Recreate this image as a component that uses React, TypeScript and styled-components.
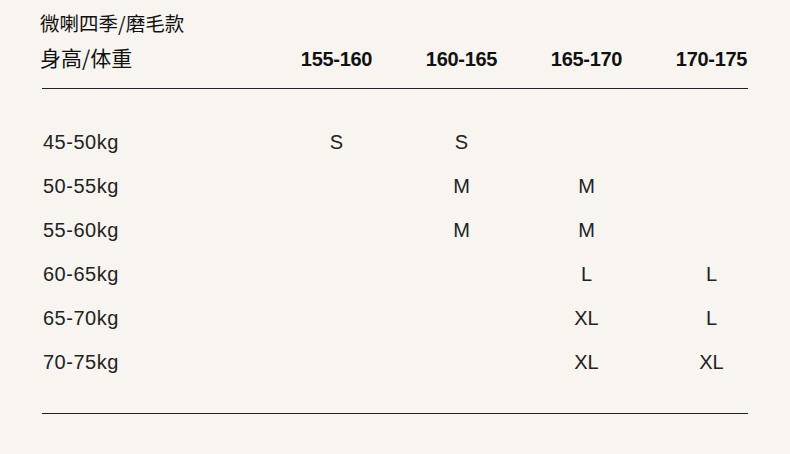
import React from 'react';
import styled, { createGlobalStyle } from 'styled-components';

const GlobalStyle = createGlobalStyle`
  html, body {
    margin: 0;
    padding: 0;
    background: #f8f5f0;
  }
  body {
    font-family: "Liberation Sans", Arial, "Noto Sans CJK SC", sans-serif;
    color: #1c1c1c;
  }
`;

const Page = styled.div`
  width: 790px;
  height: 454px;
  box-sizing: border-box;
  padding: 11px 0 0 42px;
  overflow: hidden;
`;

const Table = styled.div`
  width: 706px;
`;

const Caption = styled.div`
  margin-left: -2px;
  font-family: "Noto Sans CJK SC", sans-serif;
  font-size: 19.5px;
  line-height: 24px;
  color: #111;
`;

const Grid = styled.div<{ $height: number }>`
  display: grid;
  grid-template-columns: 232px repeat(4, 125px);
  height: ${p => p.$height}px;
  align-items: center;
`;

const HeadRow = styled(Grid)`
  margin-top: 8px;
  align-items: end;
  padding-bottom: 1px;
`;

const HeadLabel = styled.div`
  margin-left: -2px;
  margin-bottom: 16px;
  font-family: "Noto Sans CJK SC", sans-serif;
  font-size: 21px;
  line-height: 28px;
  color: #111;
`;

const HeadCell = styled.div`
  text-align: center;
  margin-bottom: 16px;
  font-size: 20px;
  font-weight: 700;
  line-height: 24px;
  letter-spacing: -0.3px;
  color: #111;
`;

const Divider = styled.div<{ $gap: number }>`
  height: 1px;
  background: #222;
  margin-top: ${p => p.$gap}px;
`;

const Body = styled.div`
  padding-top: 30px;
`;

const RowLabel = styled.div`
  font-size: 20px;
  line-height: 24px;
  color: #222;
  letter-spacing: 0.5px;
  margin-left: 1px;
  padding-top: 1px;
`;

const SizeCell = styled.div`
  text-align: center;
  font-size: 20px;
  line-height: 24px;
  color: #222;
  padding-top: 1px;
`;

const heights = ['155-160', '160-165', '165-170', '170-175'];

const rows: { label: string; sizes: string[] }[] = [
  { label: '45-50kg', sizes: ['S', 'S', '', ''] },
  { label: '50-55kg', sizes: ['', 'M', 'M', ''] },
  { label: '55-60kg', sizes: ['', 'M', 'M', ''] },
  { label: '60-65kg', sizes: ['', '', 'L', 'L'] },
  { label: '65-70kg', sizes: ['', '', 'XL', 'L'] },
  { label: '70-75kg', sizes: ['', '', 'XL', 'XL'] },
];

export default function App() {
  return (
    <Page>
      <GlobalStyle />
      <Caption>微喇四季/磨毛款</Caption>
      <Table>
        <HeadRow $height={44}>
          <HeadLabel>身高/体重</HeadLabel>
          {heights.map(h => (
            <HeadCell key={h}>{h}</HeadCell>
          ))}
        </HeadRow>
        <Divider $gap={0} />
        <Body>
          {rows.map(r => (
            <Grid key={r.label} $height={44}>
              <RowLabel>{r.label}</RowLabel>
              {r.sizes.map((s, i) => (
                <SizeCell key={i}>{s}</SizeCell>
              ))}
            </Grid>
          ))}
        </Body>
        <Divider $gap={30} />
      </Table>
    </Page>
  );
}
